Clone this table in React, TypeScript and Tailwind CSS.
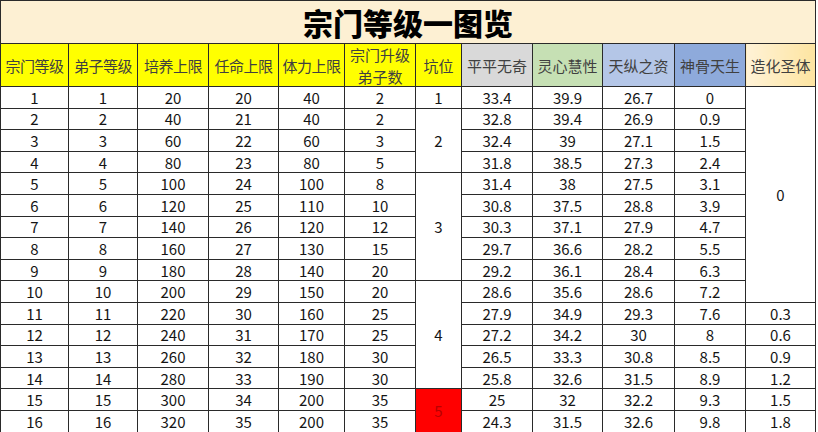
import React from "react";

const rows: (string | number)[][] = [
  [1, 1, 20, 20, 40, 2, "33.4", "39.9", "26.7", "0"],
  [2, 2, 40, 21, 40, 2, "32.8", "39.4", "26.9", "0.9"],
  [3, 3, 60, 22, 60, 3, "32.4", "39", "27.1", "1.5"],
  [4, 4, 80, 23, 80, 5, "31.8", "38.5", "27.3", "2.4"],
  [5, 5, 100, 24, 100, 8, "31.4", "38", "27.5", "3.1"],
  [6, 6, 120, 25, 110, 10, "30.8", "37.5", "28.8", "3.9"],
  [7, 7, 140, 26, 120, 12, "30.3", "37.1", "27.9", "4.7"],
  [8, 8, 160, 27, 130, 15, "29.7", "36.6", "28.2", "5.5"],
  [9, 9, 180, 28, 140, 20, "29.2", "36.1", "28.4", "6.3"],
  [10, 10, 200, 29, 150, 20, "28.6", "35.6", "28.6", "7.2"],
  [11, 11, 220, 30, 160, 25, "27.9", "34.9", "29.3", "7.6"],
  [12, 12, 240, 31, 170, 25, "27.2", "34.2", "30", "8"],
  [13, 13, 260, 32, 180, 30, "26.5", "33.3", "30.8", "8.5"],
  [14, 14, 280, 33, 190, 30, "25.8", "32.6", "31.5", "8.9"],
  [15, 15, 300, 34, 200, 35, "25", "32", "32.2", "9.3"],
  [16, 16, 320, 35, 200, 35, "24.3", "31.5", "32.6", "9.8"],
];

const last = ["", "", "", "", "", "", "", "", "", "", "0.3", "0.6", "0.9", "1.2", "1.5", "1.8"];

const pit: Record<number, [number, string, boolean]> = {
  0: [1, "1", false],
  1: [3, "2", false],
  4: [5, "3", false],
  9: [5, "4", false],
  14: [2, "5", true],
};

const widths = [68, 69, 71, 70, 66, 71, 46, 71, 70, 72, 71, 70];

const td = "border border-[#2a2a2a] text-center align-middle p-0";

export default function App() {
  return (
    <div
      className="w-[818px] h-[432px] overflow-hidden bg-white"
      style={{ fontFamily: '"Noto Sans CJK SC", "Noto Sans", sans-serif' }}
    >
      <table className="table-fixed border-collapse w-[815px] text-[15px] leading-none text-[#151515]">
        <colgroup>
          {widths.map((w, i) => (
            <col key={i} style={{ width: w }} />
          ))}
        </colgroup>
        <tbody>
          <tr className="h-[43px]">
            <td colSpan={12} className={`${td} bg-[#fdf0d3] text-[30px] font-black text-black`}>
              宗门等级一图览
            </td>
          </tr>
          <tr className="h-[43px] text-[15px] text-[#404040]">
            {["宗门等级", "弟子等级", "培养上限", "任命上限", "体力上限"].map((h) => (
              <td key={h} className={`${td} bg-[#ffff00] whitespace-nowrap tracking-[-0.5px]`}>
                {h}
              </td>
            ))}
            <td className={`${td} bg-[#ffff00] whitespace-nowrap`}>
              <div className="flex flex-col items-center gap-[7px] leading-none">
                <span>宗门升级</span>
                <span>弟子数</span>
              </div>
            </td>
            <td className={`${td} bg-[#ffff00]`}>坑位</td>
            <td className={`${td} bg-[#d9d9d9] whitespace-nowrap`}>平平无奇</td>
            <td className={`${td} bg-[#c6e0b4] whitespace-nowrap`}>灵心慧性</td>
            <td className={`${td} bg-[#b4c6e7] whitespace-nowrap`}>天纵之资</td>
            <td className={`${td} bg-[#8eaadb] whitespace-nowrap`}>神骨天生</td>
            <td className={`${td} bg-gradient-to-r from-[#fff2d6] to-[#fde4a0] whitespace-nowrap`}>造化圣体</td>
          </tr>
          {rows.map((r, i) => (
            <tr key={i} className="h-[21.6px]">
              {r.slice(0, 6).map((v, j) => (
                <td key={j} className={td}>
                  {v}
                </td>
              ))}
              {pit[i] && (
                <td
                  rowSpan={pit[i][0]}
                  className={`${td} ${pit[i][2] ? "bg-[#ff0000] text-[#b80000]" : ""}`}
                >
                  {pit[i][1]}
                </td>
              )}
              {r.slice(6).map((v, j) => (
                <td key={"b" + j} className={td}>
                  {v}
                </td>
              ))}
              {i === 0 && (
                <td rowSpan={10} className={td}>
                  0
                </td>
              )}
              {i >= 10 && <td className={td}>{last[i]}</td>}
            </tr>
          ))}
        </tbody>
      </table>
    </div>
  );
}
